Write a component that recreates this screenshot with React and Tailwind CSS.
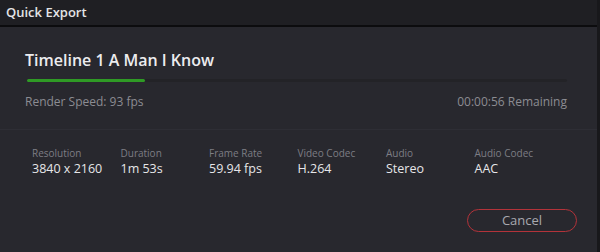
export default function App() {
  const specs = [
    { label: 'Resolution', value: '3840 x 2160' },
    { label: 'Duration', value: '1m 53s' },
    { label: 'Frame Rate', value: '59.94 fps' },
    { label: 'Video Codec', value: 'H.264' },
    { label: 'Audio', value: 'Stereo' },
    { label: 'Audio Codec', value: 'AAC' },
  ];

  return (
    <div
      className="w-[600px] h-[252px] flex bg-[#18181b] overflow-hidden"
      style={{ fontFamily: '"Open Sans", "Noto Sans", sans-serif' }}
    >
      <div className="w-[597px] flex flex-col">
        <div className="h-[27px] bg-[#1f1f23] border-b-2 border-[#0c0c0e] flex items-center px-[6px]">
          <span className="text-[13px] font-semibold text-[#e4e4e6]">Quick Export</span>
        </div>

        <div className="flex-1 bg-[#28282e] flex flex-col">
          <div className="px-[25px] pt-[21px]">
            <h1 className="text-[16px] font-semibold text-[#ececee] leading-[24px]">Timeline 1 A Man I Know</h1>
            <div className="mt-[7px] ml-[2px] mr-[5px] h-[3px] bg-[#232327] rounded-full">
              <div className="h-full w-[118px] bg-[#2f9a25] rounded-full" />
            </div>
            <div className="mt-[12px] mr-[5px] flex justify-between text-[12px] text-[#8c8c92] leading-[16px]">
              <span>Render Speed: 93 fps</span>
              <span>00:00:56 Remaining</span>
            </div>
          </div>

          <div className="mt-[19px] h-px bg-[#2e2e35]" />

          <div className="pl-[32px] pt-[16px] flex">
            {specs.map((s) => (
              <div key={s.label} className="w-[88.5px] flex flex-col">
                <span className="text-[10px] text-[#7d7d84] leading-[14px]">{s.label}</span>
                <span className="text-[12.5px] text-[#e6e6e8] leading-[18px]">{s.value}</span>
              </div>
            ))}
          </div>

          <div className="mt-auto mb-[20px] mr-[20px] flex justify-end">
            <button className="w-[110px] h-[23px] rounded-full border-[1.5px] border-[#b3333a] text-[13px] text-[#a8a8ae] flex items-center justify-center">
              Cancel
            </button>
          </div>
        </div>
      </div>
    </div>
  );
}
